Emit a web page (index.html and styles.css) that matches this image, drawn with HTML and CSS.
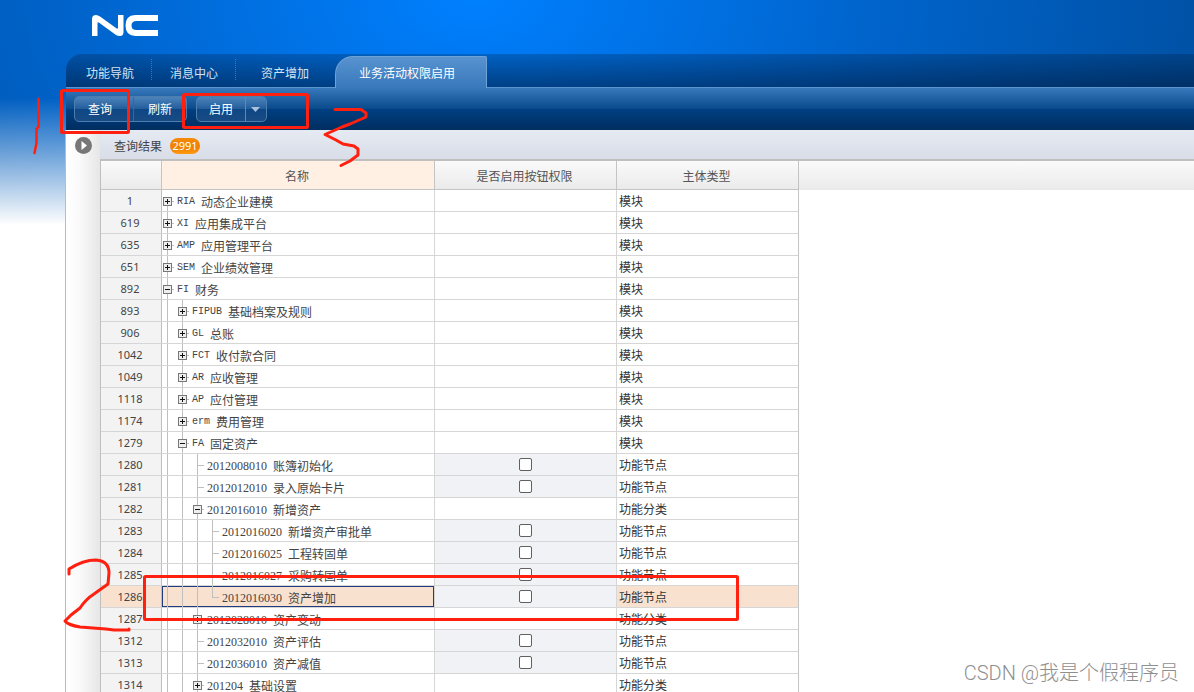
FILE: index.html
```html
<!DOCTYPE html>
<html lang="zh-CN">
<head>
<meta charset="utf-8">
<title>业务活动权限启用</title>
<link rel="stylesheet" href="styles.css">
</head>
<body>
<div class="app">
  <header class="brand">
    <svg class="logo" viewBox="0 0 67 22" role="img" aria-label="NC">
      <path fill="#fff" d="M0 21V4Q0 0 4 0Q6 0 8 1.500L24 13Q26 14.500 26 12.500V0H31.500V17Q31.500 21 28 21Q25.500 21 24 20L7.500 8Q5.500 6.500 5.500 8.500V21ZM66 0V6H44.500Q39.500 6 39.500 10.500Q39.500 15 44.500 15H66V21H43Q33.500 20.500 33.500 10.500Q33.500 .500 43 0Z"/>
    </svg>
  </header>
  <div class="workspace">
    <nav class="tabs">
      <a class="tab tab-nav" href="#">功能导航</a>
      <a class="tab tab-msg" href="#">消息中心</a>
      <a class="tab tab-asset" href="#">资产增加</a>
      <a class="tab tab-active" href="#" aria-current="page">业务活动权限启用</a>
    </nav>
    <div class="toolbar">
      <div class="group">
        <button class="btn btn-query" type="button">查询</button>
        <button class="btn btn-refresh" type="button">刷新</button>
      </div>
      <div class="group">
        <button class="btn btn-enable" type="button">启用</button>
        <button class="btn btn-drop" type="button" aria-label="更多"><svg width="9" height="5" viewBox="0 0 9 5"><path d="M0 0H9L4.500 5Z" fill="#a9c1dc"/></svg></button>
      </div>
    </div>
    <div class="content">
      <aside class="rail">
        <button class="expand" type="button" aria-label="展开"><svg width="17" height="17" viewBox="0 0 17 17"><circle cx="8.500" cy="8.500" r="8.500" fill="#777"/><path d="M6.500 4L12 8.500L6.500 13Z" fill="#fff"/></svg></button>
      </aside>
      <main class="panel">
        <div class="panel-title"><span>查询结果</span><span class="badge">2991</span></div>
        <div class="grid">
          <table>
            <colgroup><col class="c-num"><col class="c-name"><col class="c-flag"><col class="c-type"></colgroup>
            <thead><tr><th></th><th class="sorted">名称</th><th>是否启用按钮权限</th><th>主体类型</th></tr></thead>
            <tbody>
              <tr><th>1</th><td><div class="tree"><i class="line start"><button aria-label="展开" class="plus"></button></i><code class="abbr">RIA</code>动态企业建模</div></td><td></td><td>模块</td></tr>
              <tr><th>619</th><td><div class="tree"><i class="line"><button aria-label="展开" class="plus"></button></i><code class="abbr">XI</code>应用集成平台</div></td><td></td><td>模块</td></tr>
              <tr><th>635</th><td><div class="tree"><i class="line"><button aria-label="展开" class="plus"></button></i><code class="abbr">AMP</code>应用管理平台</div></td><td></td><td>模块</td></tr>
              <tr><th>651</th><td><div class="tree"><i class="line"><button aria-label="展开" class="plus"></button></i><code class="abbr">SEM</code>企业绩效管理</div></td><td></td><td>模块</td></tr>
              <tr><th>892</th><td><div class="tree"><i class="line"><button aria-label="收起" class="minus"></button></i><code class="abbr">FI</code>财务</div></td><td></td><td>模块</td></tr>
              <tr><th>893</th><td><div class="tree"><i class="line"></i><i class="line"><button aria-label="展开" class="plus"></button></i><code class="abbr">FIPUB</code>基础档案及规则</div></td><td></td><td>模块</td></tr>
              <tr><th>906</th><td><div class="tree"><i class="line"></i><i class="line"><button aria-label="展开" class="plus"></button></i><code class="abbr">GL</code>总账</div></td><td></td><td>模块</td></tr>
              <tr><th>1042</th><td><div class="tree"><i class="line"></i><i class="line"><button aria-label="展开" class="plus"></button></i><code class="abbr">FCT</code>收付款合同</div></td><td></td><td>模块</td></tr>
              <tr><th>1049</th><td><div class="tree"><i class="line"></i><i class="line"><button aria-label="展开" class="plus"></button></i><code class="abbr">AR</code>应收管理</div></td><td></td><td>模块</td></tr>
              <tr><th>1118</th><td><div class="tree"><i class="line"></i><i class="line"><button aria-label="展开" class="plus"></button></i><code class="abbr">AP</code>应付管理</div></td><td></td><td>模块</td></tr>
              <tr><th>1174</th><td><div class="tree"><i class="line"></i><i class="line"><button aria-label="展开" class="plus"></button></i><code class="abbr">erm</code>费用管理</div></td><td></td><td>模块</td></tr>
              <tr><th>1279</th><td><div class="tree"><i class="line"></i><i class="line"><button aria-label="收起" class="minus"></button></i><code class="abbr">FA</code>固定资产</div></td><td></td><td>模块</td></tr>
              <tr><th>1280</th><td><div class="tree"><i class="line"></i><i class="line"></i><i class="line leaf"></i><code>2012008010</code>账簿初始化</div></td><td class="flag"><input type="checkbox" aria-label="2012008010"></td><td>功能节点</td></tr>
              <tr><th>1281</th><td><div class="tree"><i class="line"></i><i class="line"></i><i class="line leaf"></i><code>2012012010</code>录入原始卡片</div></td><td class="flag"><input type="checkbox" aria-label="2012012010"></td><td>功能节点</td></tr>
              <tr><th>1282</th><td><div class="tree"><i class="line"></i><i class="line"></i><i class="line"><button aria-label="收起" class="minus"></button></i><code>2012016010</code>新增资产</div></td><td></td><td>功能分类</td></tr>
              <tr><th>1283</th><td><div class="tree"><i class="line"></i><i class="line"></i><i class="line"></i><i class="line leaf"></i><code>2012016020</code>新增资产审批单</div></td><td class="flag"><input type="checkbox" aria-label="2012016020"></td><td>功能节点</td></tr>
              <tr><th>1284</th><td><div class="tree"><i class="line"></i><i class="line"></i><i class="line"></i><i class="line leaf"></i><code>2012016025</code>工程转固单</div></td><td class="flag"><input type="checkbox" aria-label="2012016025"></td><td>功能节点</td></tr>
              <tr><th>1285</th><td><div class="tree"><i class="line"></i><i class="line"></i><i class="line"></i><i class="line leaf"></i><code>2012016027</code>采购转固单</div></td><td class="flag"><input type="checkbox" aria-label="2012016027"></td><td>功能节点</td></tr>
              <tr class="selected"><th>1286</th><td><div class="tree focus"><i class="line"></i><i class="line"></i><i class="line"></i><i class="line leaf end"></i><code>2012016030</code>资产增加</div></td><td class="flag"><input type="checkbox" aria-label="2012016030"></td><td>功能节点</td></tr>
              <tr><th>1287</th><td><div class="tree"><i class="line"></i><i class="line"></i><i class="line"><button aria-label="展开" class="plus"></button></i><code>2012028010</code>资产变动</div></td><td></td><td>功能分类</td></tr>
              <tr><th>1312</th><td><div class="tree"><i class="line"></i><i class="line"></i><i class="line leaf"></i><code>2012032010</code>资产评估</div></td><td class="flag"><input type="checkbox" aria-label="2012032010"></td><td>功能节点</td></tr>
              <tr><th>1313</th><td><div class="tree"><i class="line"></i><i class="line"></i><i class="line leaf"></i><code>2012036010</code>资产减值</div></td><td class="flag"><input type="checkbox" aria-label="2012036010"></td><td>功能节点</td></tr>
              <tr><th>1314</th><td><div class="tree"><i class="line"></i><i class="line"></i><i class="line"><button aria-label="展开" class="plus"></button></i><code>201204</code>基础设置</div></td><td></td><td>功能分类</td></tr>
            </tbody>
          </table>
        </div>
      </main>
    </div>
  </div>
  <svg class="notes" width="760" height="640" viewBox="0 0 760 640" aria-hidden="true">
    <g fill="none" stroke="#ff2010" stroke-width="3" stroke-linecap="round" stroke-linejoin="round">
      <rect x="61.500" y="90.500" width="67" height="42" rx="1"/>
      <rect x="183.500" y="94.500" width="124" height="33" rx="1"/>
      <rect x="144.500" y="576.500" width="593" height="43" rx="1"/>
      <path stroke-width="2.500" d="M38.500 99V127L36.500 129V143L34.500 153"/>
      <path d="M335 109.500H361L366 113V117L350 124L342 127L325 134.500L336 140L343 144L354 146L358 149V155L350 161L341 165.500"/>
      <path d="M69 574V569Q83 560 96 560Q109 561 109 573L108 584L94 594Q86 599 80 608L71 615L65 621Q68 625 80 627L106 629L114 630H129V629"/>
    </g>
  </svg>
  <div class="watermark">CSDN @我是个假程序员</div>
</div>
</body>
</html>
```
FILE: styles.css
```css
* { box-sizing: border-box; }

body {
  margin: 0;
  font: 12px/20px "Noto Sans CJK SC", sans-serif;
  color: #333;
}

button { font: inherit; color: inherit; padding: 0; border: 0; background: none; }
a { color: inherit; text-decoration: none; }

.app {
  position: relative;
  display: flex;
  flex-direction: column;
  height: 100vh;
  overflow: hidden;
  background:
    linear-gradient(rgba(255, 255, 255, 0) 98px, rgba(255, 255, 255, .4) 150px, #fff 225px),
    radial-gradient(ellipse 720px 420px at 475px 0, #0080ff, #0064cc 55%, #0052a6);
}

.brand { flex: none; height: 54px; padding: 15px 92px 0; }
.logo { display: block; width: 67px; height: 22px; }

.workspace {
  flex: 1;
  min-height: 0;
  display: flex;
  flex-direction: column;
  margin-left: 65px;
}

.tabs {
  flex: none;
  display: flex;
  align-items: flex-end;
  height: 34px;
  margin-left: 1px;
  border-radius: 16px 0 0 0;
  border-bottom: 1px solid #5b95cf;
  background: linear-gradient(rgba(0, 25, 55, .25), rgba(0, 20, 50, .55));
  color: #d4e3f3;
}
.tab { height: 33px; padding-top: 9px; }
.tab-nav { width: 86px; padding-left: 20px; }
.tab-msg { width: 84px; padding-left: 18px; }
.tab-nav, .tab-msg {
  background: repeating-linear-gradient(rgba(90, 150, 215, .6) 0 1px, transparent 1px 2px) right 5px / 1px 22px no-repeat;
}
.tab-asset { width: 99px; padding-left: 25px; }
.tab-active {
  width: 152px;
  height: 32px;
  margin-bottom: -1px;
  padding: 6px 0 0 23px;
  border: 1px solid #6ea3d8;
  border-bottom: 0;
  border-radius: 18px 2px 0 0;
  background: linear-gradient(#5893cf, #3878bc);
  color: #fff;
}

.toolbar {
  flex: none;
  display: flex;
  gap: 9px;
  height: 42px;
  margin-left: 1px;
  padding: 8px 8px 0;
  background: linear-gradient(#3878bc, #084a8c 21px, #003f82 21px, #002e60);
}
.group {
  display: flex;
  height: 26px;
  border: 1px solid #4d7dad;
  border-radius: 5px;
  background: linear-gradient(#4d83bb, #225d9b 50%, #0e4785 50%, #184b84);
  color: #fff;
}
.btn-query { width: 59px; padding-right: 8px; border-right: 1px solid #37689b; }
.btn-refresh { width: 52px; }
.btn-enable { width: 49px; border-right: 1px solid #5d89b5; }
.btn-drop { display: flex; width: 18px; align-items: center; justify-content: center; }
.group:last-child { width: 71px; }

.content {
  flex: 1;
  min-height: 0;
  display: flex;
  border-left: 1px solid #bbb;
}
.rail {
  flex: none;
  width: 34px;
  padding: 7px 0 0 9px;
  background: linear-gradient(90deg, #fff, #fafafa 40%, #e6e6e6);
}
.expand { display: block; }
.expand svg { display: block; }

.panel { flex: 1; min-width: 0; background: #fff; overflow: hidden; }
.panel-title {
  display: flex;
  align-items: center;
  gap: 8px;
  height: 31px;
  padding: 2px 14px 0;
  border-bottom: 2px solid #bfbfbf;
  background: linear-gradient(#e6eaf3, #d8dde7);
  color: #444;
}
.badge {
  width: 30px;
  height: 16px;
  border-radius: 8px;
  background: linear-gradient(#f58b07, #f08000 60%, #ff9a10);
  color: #fff;
  font: 11px/16px "Noto Sans", sans-serif;
  text-align: center;
}

.grid { background: linear-gradient(#fafafa, #eaeaea) 0 0 / 100% 29px no-repeat; }
table {
  width: 699px;
  table-layout: fixed;
  border-collapse: separate;
  border-spacing: 0;
  border-left: 1px solid #bfbfbf;
}
.c-num { width: 61px; }
.c-name { width: 273px; }
.c-flag, .c-type { width: 182px; }

th, td {
  height: 22px;
  padding: 0;
  border-right: 1px solid #d6d6d6;
  border-bottom: 1px solid #d6d6d6;
  text-align: left;
  line-height: 20px;
  white-space: nowrap;
}
td:last-child { padding-left: 2px; border-right-color: #c4c4c4; }
thead th {
  height: 29px;
  padding: 2px 2px 0 0;
  border-color: #c4c4c4;
  color: #555;
  font-weight: 400;
  text-align: center;
}
thead .sorted { background: #fff0e3; }
tbody th {
  padding-right: 2px;
  border-right-color: #bfbfbf;
  background: #f3f3f3;
  color: #444;
  font: 11px/20px "Noto Sans", sans-serif;
  text-align: center;
}

.tree { display: flex; height: 21px; line-height: 24px; color: #444; }
.tree code { margin-right: 6px; font: 12px/24px "Liberation Serif", serif; }
.tree .abbr { font: 10px/24px "Liberation Mono", monospace; }
.line {
  flex: none;
  width: 15px;
  padding: 7px 0 0 1px;
  background: linear-gradient(#bfbfbf, #bfbfbf) 5px 0 / 1px 100% no-repeat;
}
.start { background-position: 5px 11px; }
.leaf {
  background:
    linear-gradient(#bfbfbf, #bfbfbf) 5px 0 / 1px 100% no-repeat,
    linear-gradient(#bfbfbf, #bfbfbf) 6px 11px / 6px 1px no-repeat;
}
.end { background-size: 1px 12px, 6px 1px; }
.plus, .minus {
  display: block;
  width: 9px;
  height: 9px;
  border: 1px solid #777;
  box-shadow: 2px 0 0 -1px transparent;
  background: linear-gradient(#111, #111) center / 5px 1px no-repeat #eee;
}
.plus {
  background:
    linear-gradient(#111, #111) center / 5px 1px no-repeat,
    linear-gradient(#111, #111) center / 1px 5px no-repeat #eee;
}
.line:has(button) {
  background:
    linear-gradient(#bfbfbf, #bfbfbf) 5px 0 / 1px 100% no-repeat,
    linear-gradient(#bfbfbf, #bfbfbf) 10px 11px / 2px 1px no-repeat;
}
.start:has(button) { background-position: 5px 11px, 10px 11px; }

.flag { background: #f1f2f6; text-align: center; }
.flag input {
  appearance: none;
  display: block;
  width: 13px;
  height: 13px;
  margin: 0 auto;
  border: 1px solid #606060;
  border-radius: 2px;
  background: #fff;
}
.selected th, .selected td:not(.flag) { background: #f9e1d0; }
.focus { box-shadow: inset 0 0 0 1px #1f3c80; }

.notes { position: absolute; left: 0; top: 0; }
.watermark {
  position: absolute;
  right: 15px;
  bottom: 5px;
  color: #8f8f8f;
  font: 300 20px/28px Roboto, "Noto Sans CJK SC", sans-serif;
}
```
